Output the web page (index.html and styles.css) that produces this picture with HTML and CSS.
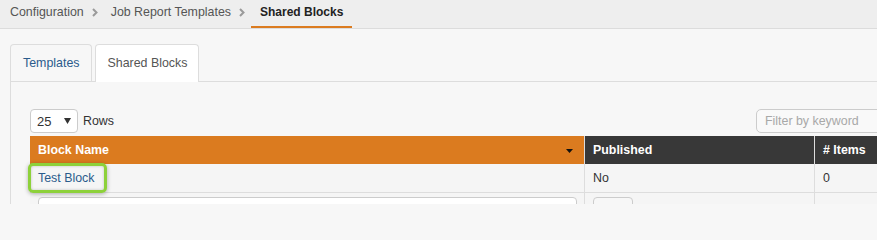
FILE: index.html
```html
<!DOCTYPE html>
<html>
<head>
<meta charset="utf-8">
<link rel="stylesheet" href="styles.css">
</head>
<body>
<div class="page">
<nav class="crumbs">
  <a class="crumb">Configuration</a>
  <svg class="chev" width="6" height="9" viewBox="0 0 6 9"><polyline points="1,1 4.5,4.5 1,8" fill="none" stroke="#9a9a9a" stroke-width="2"/></svg>
  <a class="crumb">Job Report Templates</a>
  <svg class="chev" width="6" height="9" viewBox="0 0 6 9"><polyline points="1,1 4.5,4.5 1,8" fill="none" stroke="#9a9a9a" stroke-width="2"/></svg>
  <span class="crumb current">Shared Blocks</span>
</nav>
<main class="main">
  <ul class="tabs">
    <li class="tab">Templates</li>
    <li class="tab active">Shared Blocks</li>
  </ul>
  <section class="panel">
    <div class="toolbar">
      <div class="rows">
        <div class="select"><span>25</span><svg width="7" height="6" viewBox="0 0 7 6"><polygon points="0,0 7,0 3.5,6" fill="#333"/></svg></div>
        <span class="rows-label">Rows</span>
      </div>
      <div class="filter">Filter by keyword</div>
    </div>
    <table class="grid">
      <thead>
        <tr>
          <th class="c-name sorted">Block Name<svg class="sort" width="7" height="4" viewBox="0 0 7 4"><polygon points="0,0 7,0 3.5,4" fill="#111"/></svg></th>
          <th class="c-pub">Published</th>
          <th class="c-items"># Items</th>
        </tr>
      </thead>
      <tbody>
        <tr>
          <td class="c-name"><a class="link">Test Block</a><span class="highlight"></span></td>
          <td>No</td>
          <td>0</td>
        </tr>
        <tr class="edit">
          <td><div class="input"></div></td>
          <td><div class="btn"></div></td>
          <td></td>
        </tr>
      </tbody>
    </table>
  </section>
</main>
</div>
</body>
</html>
```

FILE: styles.css
```css
html, body {
  margin: 0;
  padding: 0;
  background: #f7f7f7;
  overflow: hidden;
}
.page {
  width: 877px;
  height: 204px;
  overflow: hidden;
  background: #f7f7f7;
  font-family: "Liberation Sans", Arial, sans-serif;
  font-size: 12.4px;
  color: #333;
}
.crumbs {
  display: flex;
  align-items: flex-start;
  height: 28px;
  background: #eeeeee;
  border-bottom: 1px solid #dcdcdc;
  padding-left: 10px;
}
.crumb {
  line-height: 16px;
  padding-top: 4px;
  color: #555;
  white-space: nowrap;
}
.chev {
  margin: 8px 13px 0 8px;
  flex: none;
}
.current {
  color: #222;
  font-weight: bold;
  font-size: 12px;
  padding: 4px 9px 0 9px;
  height: 22px;
  border-bottom: 2px solid #db7b1f;
  margin-left: -7px;
}
.main {
  padding-top: 15px;
  overflow: hidden;
}
.tabs {
  list-style: none;
  margin: 0 0 0 10px;
  padding: 0;
  display: flex;
  border-bottom: 1px solid #dddddd;
}
.tab {
  box-sizing: border-box;
  height: 37px;
  padding: 10px 12px 0 12px;
  line-height: 17px;
  border: 1px solid #dddddd;
  border-bottom: none;
  border-radius: 4px 4px 0 0;
  margin-right: 3px;
  color: #2a5b8c;
  background: #f7f7f7;
}
.tab.active {
  background: #ffffff;
  color: #555;
  height: 38px;
  margin-bottom: -1px;
  padding-right: 11px;
  padding-left: 11px;
}
.panel {
  margin-left: 10px;
  border-left: 1px solid #dddddd;
  padding: 27px 0 0 19px;
  width: 906px;
}
.toolbar {
  display: flex;
  justify-content: space-between;
  align-items: center;
  height: 24px;
}
.rows {
  display: flex;
  align-items: center;
}
.select {
  width: 48px;
  height: 24px;
  box-sizing: border-box;
  border: 1px solid #cccccc;
  border-radius: 4px;
  background: #ffffff;
  display: flex;
  align-items: center;
  justify-content: space-between;
  padding: 0 6px 0 6px;
  color: #333;
  font-size: 13px;
}
.rows-label {
  margin-left: 5px;
  color: #333;
}
.filter {
  width: 180px;
  height: 24px;
  box-sizing: border-box;
  border: 1px solid #cccccc;
  border-radius: 5px;
  background: #f9f9f9;
  color: #a8a8a8;
  padding-left: 8px;
  line-height: 22px;
}
.grid {
  margin-top: 3px;
  width: 906px;
  border-collapse: collapse;
  table-layout: fixed;
}
.grid th {
  height: 28px;
  padding: 0 8px;
  text-align: left;
  font-weight: bold;
  color: #ffffff;
  background: #383838;
  border-right: 1px solid #dddddd;
}
.grid th.sorted {
  background: #db7b1f;
  position: relative;
}
.sort {
  position: absolute;
  right: 11px;
  top: 13px;
}
.c-name { width: 538px; }
.c-pub { width: 213px; }
.grid td {
  height: 28px;
  padding: 0 8px;
  border-right: 1px solid #dddddd;
  border-bottom: 1px solid #dddddd;
  background: #f5f5f5;
  color: #333;
}
.grid td.c-name {
  position: relative;
}
.link {
  color: #2a5b8c;
}
.highlight {
  position: absolute;
  left: -2px;
  top: -1px;
  width: 79px;
  height: 30px;
  box-sizing: border-box;
  border: 3px solid #8dd13a;
  border-radius: 5px;
  box-shadow: 0 1px 4px rgba(0, 0, 0, 0.3), inset 0 0 3px rgba(0, 0, 0, 0.2);
}
.edit td {
  vertical-align: top;
  padding-top: 4px;
}
.input {
  width: 539px;
  height: 24px;
  box-sizing: border-box;
  border: 1px solid #cccccc;
  border-radius: 4px;
  background: #ffffff;
}
.btn {
  width: 40px;
  height: 24px;
  box-sizing: border-box;
  border: 1px solid #cccccc;
  border-radius: 4px;
  background: #f7f7f7;
}
```
